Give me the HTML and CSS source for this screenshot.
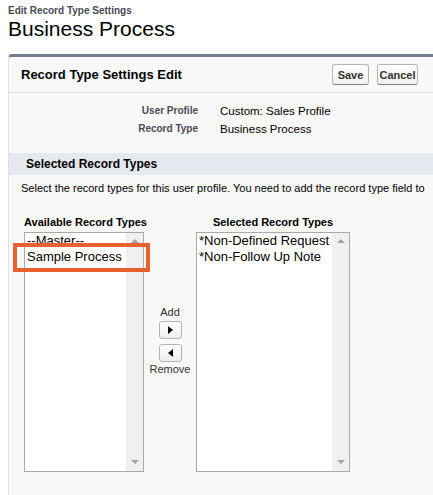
FILE: index.html
```html
<!DOCTYPE html>
<html>
<head>
<meta charset="utf-8">
<link rel="stylesheet" href="styles.css">
</head>
<body>
<div class="page">
  <div class="crumb">Edit Record Type Settings</div>
  <h1 class="title">Business Process</h1>
  <div class="panel">
    <div class="panel-header">
      <h2>Record Type Settings Edit</h2>
      <div class="btns">
        <button class="btn btn-save">Save</button>
        <button class="btn btn-cancel">Cancel</button>
      </div>
    </div>
    <div class="details">
      <div class="label">User Profile</div><div class="value">Custom: Sales Profile</div>
      <div class="label">Record Type</div><div class="value">Business Process</div>
    </div>
    <div class="subheader">Selected Record Types</div>
    <p class="desc">Select the record types for this user profile. You need to add the record type field to</p>
    <div class="dueling">
      <div class="col col-left">
        <div class="col-head">Available Record Types</div>
        <div class="listbox">
          <div class="items">
            <div class="item">--Master--</div>
            <div class="item">Sample Process</div>
          </div>
          <div class="sb"><span class="sb-up"></span><span class="sb-down"></span></div>
        </div>
        <div class="highlight"></div>
      </div>
      <div class="mid">
        <div class="mid-label">Add</div>
        <button class="arrow-btn arrow-add"><span class="tri-right"></span></button>
        <button class="arrow-btn arrow-remove"><span class="tri-left"></span></button>
        <div class="mid-label">Remove</div>
      </div>
      <div class="col col-right">
        <div class="col-head">Selected Record Types</div>
        <div class="listbox">
          <div class="items">
            <div class="item">*Non-Defined Request</div>
            <div class="item">*Non-Follow Up Note</div>
          </div>
          <div class="sb"><span class="sb-up"></span><span class="sb-down"></span></div>
        </div>
      </div>
    </div>
  </div>
</div>
</body>
</html>
```
FILE: styles.css
```css
html, body {
  margin: 0;
  padding: 0;
  overflow: hidden;
  background: #ffffff;
  font-family: "Liberation Sans", Arial, sans-serif;
  color: #000;
}

.page {
  padding: 5px 0 0 8px;
}

.crumb {
  font-size: 10px;
  line-height: 12px;
  font-weight: bold;
  color: #4a4a56;
}

.title {
  margin: 0;
  font-size: 21px;
  line-height: 24px;
  font-weight: normal;
  color: #000;
}

.panel {
  margin-top: 13px;
  background: #f8f8f8;
  border-top: 3px solid #747e92;
  border-left: 1px solid #e0e0e0;
  border-top-left-radius: 4px;
  padding-bottom: 40px;
  overflow: hidden;
}

.panel-header {
  display: flex;
  align-items: center;
  height: 35px;
  padding-left: 12px;
  border-bottom: 1px solid #dcdcdc;
}

.panel-header h2 {
  flex: 0 0 311px;
  margin: 0;
  font-size: 13px;
  line-height: 16px;
  font-weight: bold;
  color: #000;
}

.btns {
  display: flex;
  gap: 8px;
}

.btn {
  box-sizing: border-box;
  height: 21px;
  padding: 0;
  font-family: "Liberation Sans", Arial, sans-serif;
  font-size: 11px;
  font-weight: bold;
  color: #333;
  background: linear-gradient(#ffffff, #f1f1f1);
  border: 1px solid #b5b5b5;
  border-bottom-color: #7f7f7f;
  border-radius: 3px;
}

.btn-save { width: 37px; }
.btn-cancel { width: 41px; }

.details {
  display: grid;
  grid-template-columns: 189px auto;
  column-gap: 22px;
  padding: 9px 0 15px;
}

.label {
  text-align: right;
  font-size: 10px;
  font-weight: bold;
  line-height: 18px;
  color: #4a4a56;
}

.value {
  font-size: 11.5px;
  line-height: 18px;
  color: #000;
}

.subheader {
  height: 22px;
  line-height: 22px;
  padding-left: 17px;
  background: #e5e8ee;
  font-size: 12px;
  font-weight: bold;
  color: #000;
}

.desc {
  margin: 0;
  padding: 6px 0 0 12px;
  font-size: 11px;
  line-height: 14px;
  white-space: nowrap;
  color: #000;
}

.dueling {
  display: flex;
  padding: 20px 0 0 15px;
}

.col {
  position: relative;
  display: flex;
  flex-direction: column;
}

.col-left { width: 120px; }
.col-right { width: 154px; }

.col-head {
  font-size: 11px;
  line-height: 14px;
  font-weight: bold;
  color: #000;
  white-space: nowrap;
  margin-bottom: 3px;
}

.col-right .col-head {
  text-align: center;
}

.listbox {
  box-sizing: border-box;
  display: flex;
  height: 240px;
  background: #ffffff;
  border: 1px solid #a9a9a9;
}

.items {
  flex: 1;
  padding: 0 0 0 2px;
  font-size: 13px;
  line-height: 16px;
  color: #000;
  white-space: nowrap;
  overflow: hidden;
}

.sb {
  position: relative;
  flex: 0 0 17px;
  background: #f0f0f0;
}

.sb-up, .sb-down {
  position: absolute;
  left: 5px;
  width: 0;
  height: 0;
  border-left: 4px solid transparent;
  border-right: 4px solid transparent;
}

.sb-up {
  top: 6px;
  border-bottom: 4px solid #a3a3a3;
}

.sb-down {
  bottom: 7px;
  border-top: 4px solid #a3a3a3;
}

.highlight {
  position: absolute;
  left: -11px;
  top: 28px;
  box-sizing: border-box;
  width: 137px;
  height: 29px;
  border: 4px solid #e8602b;
  border-radius: 1px;
}

.mid {
  width: 52px;
  display: flex;
  flex-direction: column;
  align-items: center;
  padding-top: 91px;
}

.mid-label {
  font-size: 11px;
  line-height: 13px;
  color: #333;
}

.arrow-btn {
  box-sizing: border-box;
  width: 23px;
  height: 18px;
  padding: 0;
  display: flex;
  align-items: center;
  justify-content: center;
  background: linear-gradient(#ffffff, #ededed);
  border: 1px solid #b5b5b5;
  border-radius: 3px;
}

.arrow-add { margin-top: 2px; }
.arrow-remove { margin-top: 5px; margin-bottom: 1px; }

.tri-right {
  width: 0;
  height: 0;
  border-top: 4.5px solid transparent;
  border-bottom: 4.5px solid transparent;
  border-left: 5px solid #000;
}

.tri-left {
  width: 0;
  height: 0;
  border-top: 4.5px solid transparent;
  border-bottom: 4.5px solid transparent;
  border-right: 5px solid #000;
}
```
